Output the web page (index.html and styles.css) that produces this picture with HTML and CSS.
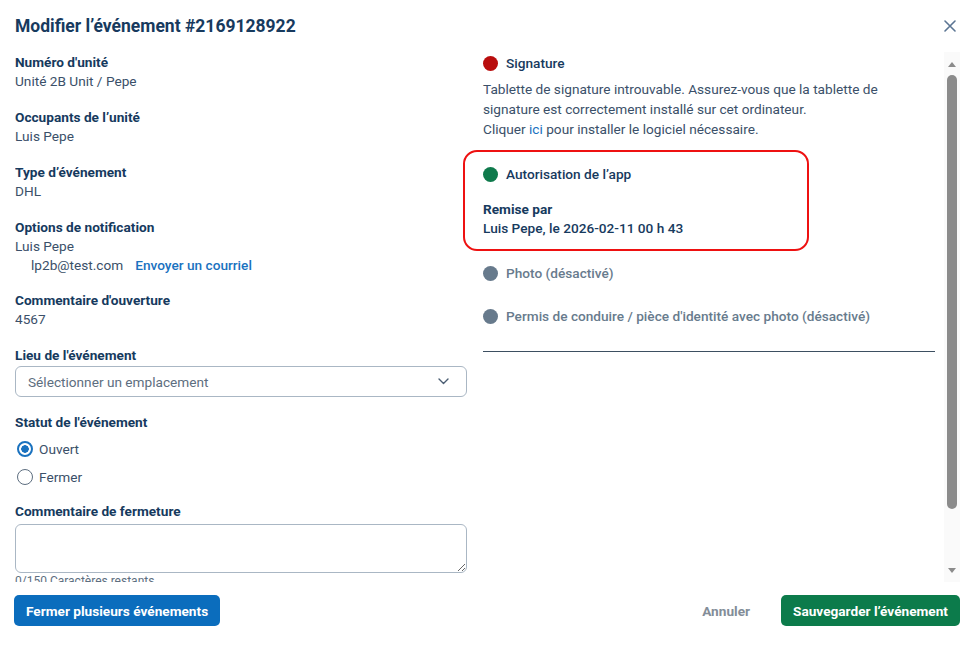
FILE: index.html
```html
<!DOCTYPE html>
<html lang="fr">
<head>
<meta charset="utf-8">
<title>Modifier l’événement</title>
<link rel="stylesheet" href="styles.css">
</head>
<body>
<div class="dialog">
  <header class="dialog-header">
    <h1 class="dialog-title">Modifier l’événement #2169128922</h1>
    <button class="close-btn" aria-label="Fermer">
      <svg width="12" height="12" viewBox="0 0 12 12"><path d="M1 1L11 11M11 1L1 11" stroke="#5b7593" stroke-width="1.6" stroke-linecap="round"/></svg>
    </button>
  </header>

  <div class="dialog-body">
    <div class="scroll-area">
      <div class="columns">
        <div class="col-left">
          <div class="field">
            <div class="label">Numéro d'unité</div>
            <div class="value">Unité 2B Unit / Pepe</div>
          </div>
          <div class="field">
            <div class="label">Occupants de l’unité</div>
            <div class="value">Luis Pepe</div>
          </div>
          <div class="field">
            <div class="label">Type d’événement</div>
            <div class="value">DHL</div>
          </div>
          <div class="field">
            <div class="label">Options de notification</div>
            <div class="value">Luis Pepe</div>
            <div class="value email-row"><span>lp2b@test.com</span><a class="link strong" href="#">Envoyer un courriel</a></div>
          </div>
          <div class="field">
            <div class="label">Commentaire d'ouverture</div>
            <div class="value">4567</div>
          </div>
          <div class="field field-select">
            <div class="label">Lieu de l'événement</div>
            <div class="select">
              <span>Sélectionner un emplacement</span>
              <svg width="11" height="7" viewBox="0 0 11 7"><path d="M1 1l4.5 4.5L10 1" fill="none" stroke="#4a5d72" stroke-width="1.4" stroke-linecap="round" stroke-linejoin="round"/></svg>
            </div>
          </div>
          <div class="field field-radio">
            <div class="label">Statut de l'événement</div>
            <div class="radio-row"><span class="radio checked"></span>Ouvert</div>
            <div class="radio-row"><span class="radio"></span>Fermer</div>
          </div>
          <div class="field last">
            <div class="label">Commentaire de fermeture</div>
            <textarea class="textarea"></textarea>
            <div class="counter">0/150 Caractères restants</div>
          </div>
        </div>

        <div class="col-right">
          <div class="status first">
            <div class="status-row"><span class="dot red"></span><span class="status-title">Signature</span></div>
            <p class="status-text">Tablette de signature introuvable. Assurez-vous que la tablette de signature est correctement installé sur cet ordinateur.<br>Cliquer <a class="link" href="#">ici</a> pour installer le logiciel nécessaire.</p>
          </div>
          <div class="status auth">
            <div class="status-row"><span class="dot green"></span><span class="status-title">Autorisation de l’app</span></div>
            <div class="label remise">Remise par</div>
            <div class="value strong-value">Luis Pepe, le 2026-02-11 00 h 43</div>
          </div>
          <div class="status disabled">
            <div class="status-row"><span class="dot gray"></span><span class="status-title">Photo (désactivé)</span></div>
          </div>
          <div class="status disabled">
            <div class="status-row"><span class="dot gray"></span><span class="status-title">Permis de conduire / pièce d'identité avec photo (désactivé)</span></div>
          </div>
          <hr class="divider">
        </div>
      </div>
    </div>
    <div class="scrollbar" aria-hidden="true">
      <span class="sb-arrow up"></span>
      <span class="sb-thumb"></span>
      <span class="sb-space"></span>
      <span class="sb-arrow down"></span>
    </div>
  </div>

  <footer class="dialog-footer">
    <button class="btn btn-blue">Fermer plusieurs événements</button>
    <div class="footer-right">
      <button class="btn btn-text">Annuler</button>
      <button class="btn btn-green">Sauvegarder l’événement</button>
    </div>
  </footer>
</div>
</body>
</html>
```

FILE: styles.css
```css
* { box-sizing: border-box; }
html, body { margin: 0; padding: 0; background: #ffffff; }
body {
  font-family: Roboto, "Liberation Sans", Arial, sans-serif;
  font-size: 13.65px;
  color: #3b5069;
}
.dialog {
  width: 975px;
  height: 646px;
  display: flex;
  flex-direction: column;
  background: #fff;
}
.dialog-header {
  display: flex;
  align-items: center;
  justify-content: space-between;
  height: 52px;
  padding: 0 18px 0 15px;
}
.dialog-title {
  margin: 0;
  font-size: 17.5px;
  font-weight: 700;
  color: #173a5e;
}
.close-btn {
  border: 0;
  background: none;
  padding: 0;
  width: 14px;
  height: 14px;
  display: flex;
  align-items: center;
  justify-content: center;
  cursor: pointer;
}
.dialog-body {
  margin: 0 15px;
  height: 530px;
  display: flex;
}
.scroll-area {
  flex: 1;
  overflow: hidden;
  padding-right: 9px;
}
.scrollbar {
  width: 16px;
  flex: none;
  background: #fafafa;
  display: flex;
  flex-direction: column;
  align-items: center;
  padding: 4px 0 3px;
}
.sb-arrow {
  width: 0;
  height: 0;
  border-left: 4.5px solid transparent;
  border-right: 4.5px solid transparent;
  margin: 6px 0;
}
.sb-arrow.up { border-bottom: 5px solid #8b8b8b; }
.sb-arrow.down { border-top: 5px solid #8b8b8b; }
.sb-thumb {
  width: 10px;
  height: 434px;
  margin-top: 2px;
  background: #8b8b8b;
  border-radius: 5px;
}
.sb-space { flex: 1; }
.columns {
  display: grid;
  grid-template-columns: 1fr 1fr;
  column-gap: 16px;
  padding-top: 1px;
}
.field { margin-bottom: 17px; }
.field.field-select { margin-bottom: 16px; }
.field.field-radio { margin-bottom: 11px; }
.field.last { margin-bottom: 0; }
.label {
  font-weight: 700;
  color: #163a5e;
  line-height: 19px;
}
.value {
  line-height: 19px;
  color: #3b5069;
}
.email-row {
  padding-left: 16px;
  line-height: 18px;
  display: flex;
  gap: 12px;
}
.link { color: #1a72bf; text-decoration: none; }
.link.strong { font-weight: 500; }
.select {
  margin-top: 1px;
  height: 31px;
  border: 1px solid #aab7c4;
  border-radius: 6px;
  display: flex;
  align-items: center;
  justify-content: space-between;
  padding: 0 17px 0 12px;
  color: #5d6e80;
}
.radio-row {
  display: flex;
  align-items: center;
  gap: 6px;
  height: 28px;
  color: #3b5069;
  padding-left: 2px;
}
.field .label + .radio-row { margin-top: 3px; }
.radio {
  width: 16px;
  height: 16px;
  border-radius: 50%;
  border: 1.5px solid #5d6e80;
  background: #fff;
  flex: none;
}
.radio.checked {
  border: 2px solid #1a72bf;
  background: radial-gradient(circle, #1a72bf 0 3.5px, #fff 4px);
}
.textarea {
  display: block;
  margin-top: 3px;
  width: 100%;
  height: 49px;
  border: 1px solid #aab7c4;
  border-radius: 6px;
  font-family: inherit;
  font-size: 13.65px;
  resize: vertical;
}
.counter {
  font-size: 12px;
  color: #5d6e80;
  line-height: 16px;
}
.status { margin-bottom: 24px; }
.status.first { margin-bottom: 25px; }
.status-row {
  display: flex;
  align-items: center;
  gap: 8px;
  line-height: 20px;
  min-height: 20px;
}
.dot {
  width: 15px;
  height: 15px;
  border-radius: 50%;
  flex: none;
}
.dot.red { background: #b90d0d; }
.dot.green { background: #0f7a4c; }
.dot.gray { background: #677a8c; }
.status-title {
  font-weight: 500;
  color: #173a5e;
}
.status-text {
  margin: 6px 0 0;
  line-height: 20px;
  color: #3b5069;
}
.auth { position: relative; margin-bottom: 25px; }
.auth::after {
  content: "";
  position: absolute;
  left: -20px;
  top: -14px;
  width: 342px;
  height: 97px;
  border: 2px solid #ee1111;
  border-radius: 14px;
  pointer-events: none;
}
.remise { margin-top: 16px; }
.strong-value { font-weight: 500; color: #173a5e; }
.disabled .status-title { color: #687b8d; }
.disabled { margin-bottom: 23px; }
.divider {
  margin: 25px 0 0;
  border: 0;
  border-top: 1px solid #3d4f61;
}
.status.disabled:last-of-type { margin-bottom: 0; }
.dialog-footer {
  flex: 1;
  display: flex;
  align-items: center;
  justify-content: space-between;
  padding: 0 15px 7px 14px;
}
.footer-right { display: flex; align-items: center; gap: 31px; }
.btn {
  font-family: inherit;
  font-size: 13.65px;
  font-weight: 700;
  border: 0;
  border-radius: 5px;
  height: 31px;
  padding: 0 12px;
  cursor: pointer;
}
.btn-blue { background: #0b6dbd; color: #fff; }
.btn-green { background: #0c7b4b; color: #fff; }
.btn-text { background: none; color: #838d98; padding: 0; }
```
